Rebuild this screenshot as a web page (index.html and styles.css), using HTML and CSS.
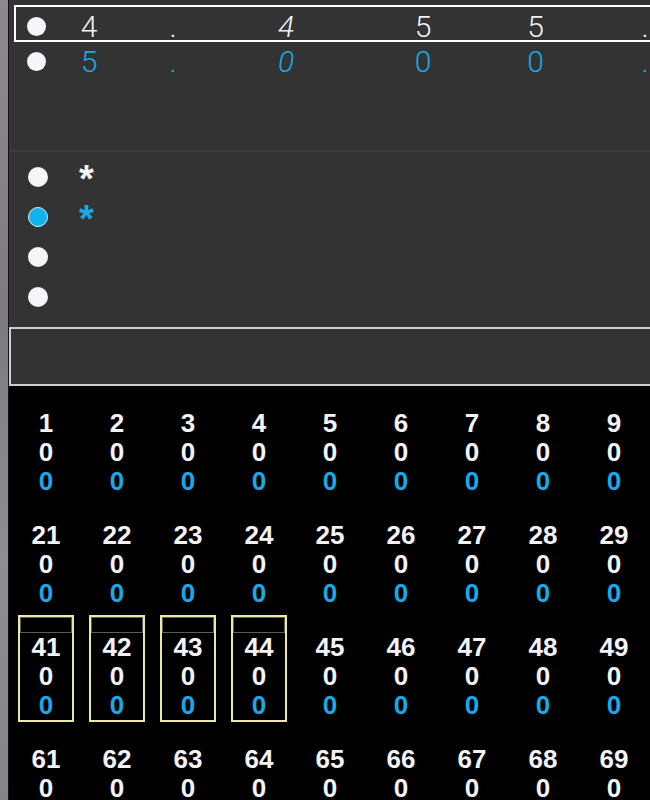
FILE: index.html
```html
<!DOCTYPE html>
<html>
<head>
<meta charset="utf-8">
<link rel="stylesheet" href="styles.css">
</head>
<body>
<div class="page">
  <div class="strip"></div>
  <div class="panel">
    <section class="values">
      <div class="vlist">
        <div class="vrow"><span class="dot"></span><span class="v">3</span><span class="v">.</span><span class="v it">3</span><span class="v">0</span><span class="v">0</span><span class="v">.</span></div>
        <div class="vrow sel"><span class="dot"></span><span class="v">4</span><span class="v">.</span><span class="v it">4</span><span class="v">5</span><span class="v">5</span><span class="v">.</span></div>
        <div class="vrow blue"><span class="dot"></span><span class="v">5</span><span class="v">.</span><span class="v it">0</span><span class="v">0</span><span class="v">0</span><span class="v">.</span></div>
      </div>
    </section>
    <div class="sep"></div>
    <section class="marks">
      <div class="mrow"><span class="dot"></span><span class="ast">*</span></div>
      <div class="mrow blue"><span class="dot"></span><span class="ast">*</span></div>
      <div class="mrow"><span class="dot"></span><span class="ast"></span></div>
      <div class="mrow"><span class="dot"></span><span class="ast"></span></div>
    </section>
    <div class="field"></div>
    <section class="grid">
      <div class="cell"><div class="cap"></div><div class="n">1</div><div class="w">0</div><div class="b">0</div></div>
      <div class="cell"><div class="cap"></div><div class="n">2</div><div class="w">0</div><div class="b">0</div></div>
      <div class="cell"><div class="cap"></div><div class="n">3</div><div class="w">0</div><div class="b">0</div></div>
      <div class="cell"><div class="cap"></div><div class="n">4</div><div class="w">0</div><div class="b">0</div></div>
      <div class="cell"><div class="cap"></div><div class="n">5</div><div class="w">0</div><div class="b">0</div></div>
      <div class="cell"><div class="cap"></div><div class="n">6</div><div class="w">0</div><div class="b">0</div></div>
      <div class="cell"><div class="cap"></div><div class="n">7</div><div class="w">0</div><div class="b">0</div></div>
      <div class="cell"><div class="cap"></div><div class="n">8</div><div class="w">0</div><div class="b">0</div></div>
      <div class="cell"><div class="cap"></div><div class="n">9</div><div class="w">0</div><div class="b">0</div></div>
      <div class="cell"><div class="cap"></div><div class="n">10</div><div class="w">0</div><div class="b">0</div></div>
      <div class="cell"><div class="cap"></div><div class="n">11</div><div class="w">0</div><div class="b">0</div></div>
      <div class="cell"><div class="cap"></div><div class="n">12</div><div class="w">0</div><div class="b">0</div></div>
      <div class="cell"><div class="cap"></div><div class="n">13</div><div class="w">0</div><div class="b">0</div></div>
      <div class="cell"><div class="cap"></div><div class="n">14</div><div class="w">0</div><div class="b">0</div></div>
      <div class="cell"><div class="cap"></div><div class="n">15</div><div class="w">0</div><div class="b">0</div></div>
      <div class="cell"><div class="cap"></div><div class="n">16</div><div class="w">0</div><div class="b">0</div></div>
      <div class="cell"><div class="cap"></div><div class="n">17</div><div class="w">0</div><div class="b">0</div></div>
      <div class="cell"><div class="cap"></div><div class="n">18</div><div class="w">0</div><div class="b">0</div></div>
      <div class="cell"><div class="cap"></div><div class="n">19</div><div class="w">0</div><div class="b">0</div></div>
      <div class="cell"><div class="cap"></div><div class="n">20</div><div class="w">0</div><div class="b">0</div></div>
      <div class="cell"><div class="cap"></div><div class="n">21</div><div class="w">0</div><div class="b">0</div></div>
      <div class="cell"><div class="cap"></div><div class="n">22</div><div class="w">0</div><div class="b">0</div></div>
      <div class="cell"><div class="cap"></div><div class="n">23</div><div class="w">0</div><div class="b">0</div></div>
      <div class="cell"><div class="cap"></div><div class="n">24</div><div class="w">0</div><div class="b">0</div></div>
      <div class="cell"><div class="cap"></div><div class="n">25</div><div class="w">0</div><div class="b">0</div></div>
      <div class="cell"><div class="cap"></div><div class="n">26</div><div class="w">0</div><div class="b">0</div></div>
      <div class="cell"><div class="cap"></div><div class="n">27</div><div class="w">0</div><div class="b">0</div></div>
      <div class="cell"><div class="cap"></div><div class="n">28</div><div class="w">0</div><div class="b">0</div></div>
      <div class="cell"><div class="cap"></div><div class="n">29</div><div class="w">0</div><div class="b">0</div></div>
      <div class="cell"><div class="cap"></div><div class="n">30</div><div class="w">0</div><div class="b">0</div></div>
      <div class="cell"><div class="cap"></div><div class="n">31</div><div class="w">0</div><div class="b">0</div></div>
      <div class="cell"><div class="cap"></div><div class="n">32</div><div class="w">0</div><div class="b">0</div></div>
      <div class="cell"><div class="cap"></div><div class="n">33</div><div class="w">0</div><div class="b">0</div></div>
      <div class="cell"><div class="cap"></div><div class="n">34</div><div class="w">0</div><div class="b">0</div></div>
      <div class="cell"><div class="cap"></div><div class="n">35</div><div class="w">0</div><div class="b">0</div></div>
      <div class="cell"><div class="cap"></div><div class="n">36</div><div class="w">0</div><div class="b">0</div></div>
      <div class="cell"><div class="cap"></div><div class="n">37</div><div class="w">0</div><div class="b">0</div></div>
      <div class="cell"><div class="cap"></div><div class="n">38</div><div class="w">0</div><div class="b">0</div></div>
      <div class="cell"><div class="cap"></div><div class="n">39</div><div class="w">0</div><div class="b">0</div></div>
      <div class="cell"><div class="cap"></div><div class="n">40</div><div class="w">0</div><div class="b">0</div></div>
      <div class="cell on"><div class="cap"></div><div class="n">41</div><div class="w">0</div><div class="b">0</div></div>
      <div class="cell on"><div class="cap"></div><div class="n">42</div><div class="w">0</div><div class="b">0</div></div>
      <div class="cell on"><div class="cap"></div><div class="n">43</div><div class="w">0</div><div class="b">0</div></div>
      <div class="cell on"><div class="cap"></div><div class="n">44</div><div class="w">0</div><div class="b">0</div></div>
      <div class="cell"><div class="cap"></div><div class="n">45</div><div class="w">0</div><div class="b">0</div></div>
      <div class="cell"><div class="cap"></div><div class="n">46</div><div class="w">0</div><div class="b">0</div></div>
      <div class="cell"><div class="cap"></div><div class="n">47</div><div class="w">0</div><div class="b">0</div></div>
      <div class="cell"><div class="cap"></div><div class="n">48</div><div class="w">0</div><div class="b">0</div></div>
      <div class="cell"><div class="cap"></div><div class="n">49</div><div class="w">0</div><div class="b">0</div></div>
      <div class="cell"><div class="cap"></div><div class="n">50</div><div class="w">0</div><div class="b">0</div></div>
      <div class="cell"><div class="cap"></div><div class="n">51</div><div class="w">0</div><div class="b">0</div></div>
      <div class="cell"><div class="cap"></div><div class="n">52</div><div class="w">0</div><div class="b">0</div></div>
      <div class="cell"><div class="cap"></div><div class="n">53</div><div class="w">0</div><div class="b">0</div></div>
      <div class="cell"><div class="cap"></div><div class="n">54</div><div class="w">0</div><div class="b">0</div></div>
      <div class="cell"><div class="cap"></div><div class="n">55</div><div class="w">0</div><div class="b">0</div></div>
      <div class="cell"><div class="cap"></div><div class="n">56</div><div class="w">0</div><div class="b">0</div></div>
      <div class="cell"><div class="cap"></div><div class="n">57</div><div class="w">0</div><div class="b">0</div></div>
      <div class="cell"><div class="cap"></div><div class="n">58</div><div class="w">0</div><div class="b">0</div></div>
      <div class="cell"><div class="cap"></div><div class="n">59</div><div class="w">0</div><div class="b">0</div></div>
      <div class="cell"><div class="cap"></div><div class="n">60</div><div class="w">0</div><div class="b">0</div></div>
      <div class="cell"><div class="cap"></div><div class="n">61</div><div class="w">0</div><div class="b">0</div></div>
      <div class="cell"><div class="cap"></div><div class="n">62</div><div class="w">0</div><div class="b">0</div></div>
      <div class="cell"><div class="cap"></div><div class="n">63</div><div class="w">0</div><div class="b">0</div></div>
      <div class="cell"><div class="cap"></div><div class="n">64</div><div class="w">0</div><div class="b">0</div></div>
      <div class="cell"><div class="cap"></div><div class="n">65</div><div class="w">0</div><div class="b">0</div></div>
      <div class="cell"><div class="cap"></div><div class="n">66</div><div class="w">0</div><div class="b">0</div></div>
      <div class="cell"><div class="cap"></div><div class="n">67</div><div class="w">0</div><div class="b">0</div></div>
      <div class="cell"><div class="cap"></div><div class="n">68</div><div class="w">0</div><div class="b">0</div></div>
      <div class="cell"><div class="cap"></div><div class="n">69</div><div class="w">0</div><div class="b">0</div></div>
      <div class="cell"><div class="cap"></div><div class="n">70</div><div class="w">0</div><div class="b">0</div></div>
      <div class="cell"><div class="cap"></div><div class="n">71</div><div class="w">0</div><div class="b">0</div></div>
      <div class="cell"><div class="cap"></div><div class="n">72</div><div class="w">0</div><div class="b">0</div></div>
      <div class="cell"><div class="cap"></div><div class="n">73</div><div class="w">0</div><div class="b">0</div></div>
      <div class="cell"><div class="cap"></div><div class="n">74</div><div class="w">0</div><div class="b">0</div></div>
      <div class="cell"><div class="cap"></div><div class="n">75</div><div class="w">0</div><div class="b">0</div></div>
      <div class="cell"><div class="cap"></div><div class="n">76</div><div class="w">0</div><div class="b">0</div></div>
      <div class="cell"><div class="cap"></div><div class="n">77</div><div class="w">0</div><div class="b">0</div></div>
      <div class="cell"><div class="cap"></div><div class="n">78</div><div class="w">0</div><div class="b">0</div></div>
      <div class="cell"><div class="cap"></div><div class="n">79</div><div class="w">0</div><div class="b">0</div></div>
      <div class="cell"><div class="cap"></div><div class="n">80</div><div class="w">0</div><div class="b">0</div></div>
    </section>
  </div>
</div>
</body>
</html>
```
FILE: styles.css
```css
* { box-sizing: border-box; }
html, body { margin: 0; padding: 0; }
body {
  width: 650px;
  height: 800px;
  overflow: hidden;
  background: #000;
  font-family: "Liberation Sans", Arial, sans-serif;
}
.page {
  display: flex;
  width: 1600px;
  height: 800px;
}
.strip {
  width: 8px;
  flex: none;
  background: linear-gradient(180deg, #8c8a8d 0%, #7d7b7e 40%, #8f8e90 70%, #858386 100%);
}
.panel {
  flex: 1;
  border-left: 1px solid #141414;
  background: #333333;
  display: flex;
  flex-direction: column;
  overflow: hidden;
}
.panel > * { flex: none; }

.dot {
  width: 19px;
  height: 19px;
  border-radius: 50%;
  background: #f6f6fa;
  margin-top: 10px;
}

/* value list */
.values {
  height: 150px;
  overflow: hidden;
}
.vlist {
  margin-top: -30px;
  padding-left: 5px;
}
.vrow {
  display: grid;
  grid-template-columns: 11px 43px 38px 130px 96px 178px 47px 172px;
  align-items: start;
  height: 35px;
  border-left: 2px solid transparent;
  color: #f2f2f4;
  font-family: Roboto, "Liberation Sans", sans-serif;
  font-weight: 300;
  font-size: 30px;
  line-height: 30px;
}
.vrow .dot { grid-column: 2; justify-self: start; }
.vrow .v { text-align: center; padding-top: 5px; }
.vrow .it { font-style: italic; }
.vrow.sel {
  height: 37px;
  border: 2px solid #ffffff;
  border-right: none;
}
.vrow.blue { color: #1aa8e2; }

.sep {
  height: 2px;
  background: #3c3c3c;
}

/* marks list */
.marks {
  padding: 5px 0 10px 19px;
}
.mrow {
  display: grid;
  grid-template-columns: 51px 40px;
  align-items: start;
  height: 40px;
  color: #f4f4f6;
}
.mrow .dot { width: 20px; height: 20px; }
.mrow.blue { color: #1aa8e2; }
.mrow.blue .dot {
  background: #12b2f0;
  border: 1px solid #d8eefa;
}
.ast {
  font-weight: 700;
  font-size: 38px;
  line-height: 38px;
  margin-top: 3px;
}

.field {
  height: 59px;
  border: 2px solid #cdcdcd;
  border-right: none;
  background: #333333;
}

/* channel grid */
.grid {
  flex: 1 1 auto;
  background: #000;
  display: grid;
  grid-template-columns: repeat(20, 56px);
  grid-auto-rows: 107px;
  column-gap: 15px;
  row-gap: 5px;
  padding: 5px 0 0 9px;
  align-content: start;
}
.cell {
  border: 2px solid transparent;
  text-align: center;
  font-weight: 700;
  font-size: 26px;
  line-height: 29px;
}
.cell.on { border-color: #ebe9a8; }
.cap {
  height: 16px;
  border: 1.5px solid transparent;
}
.cell.on .cap { border-color: #5d5d56; }
.n, .w { color: #f3f3f7; }
.b { color: #18aae6; }
```
